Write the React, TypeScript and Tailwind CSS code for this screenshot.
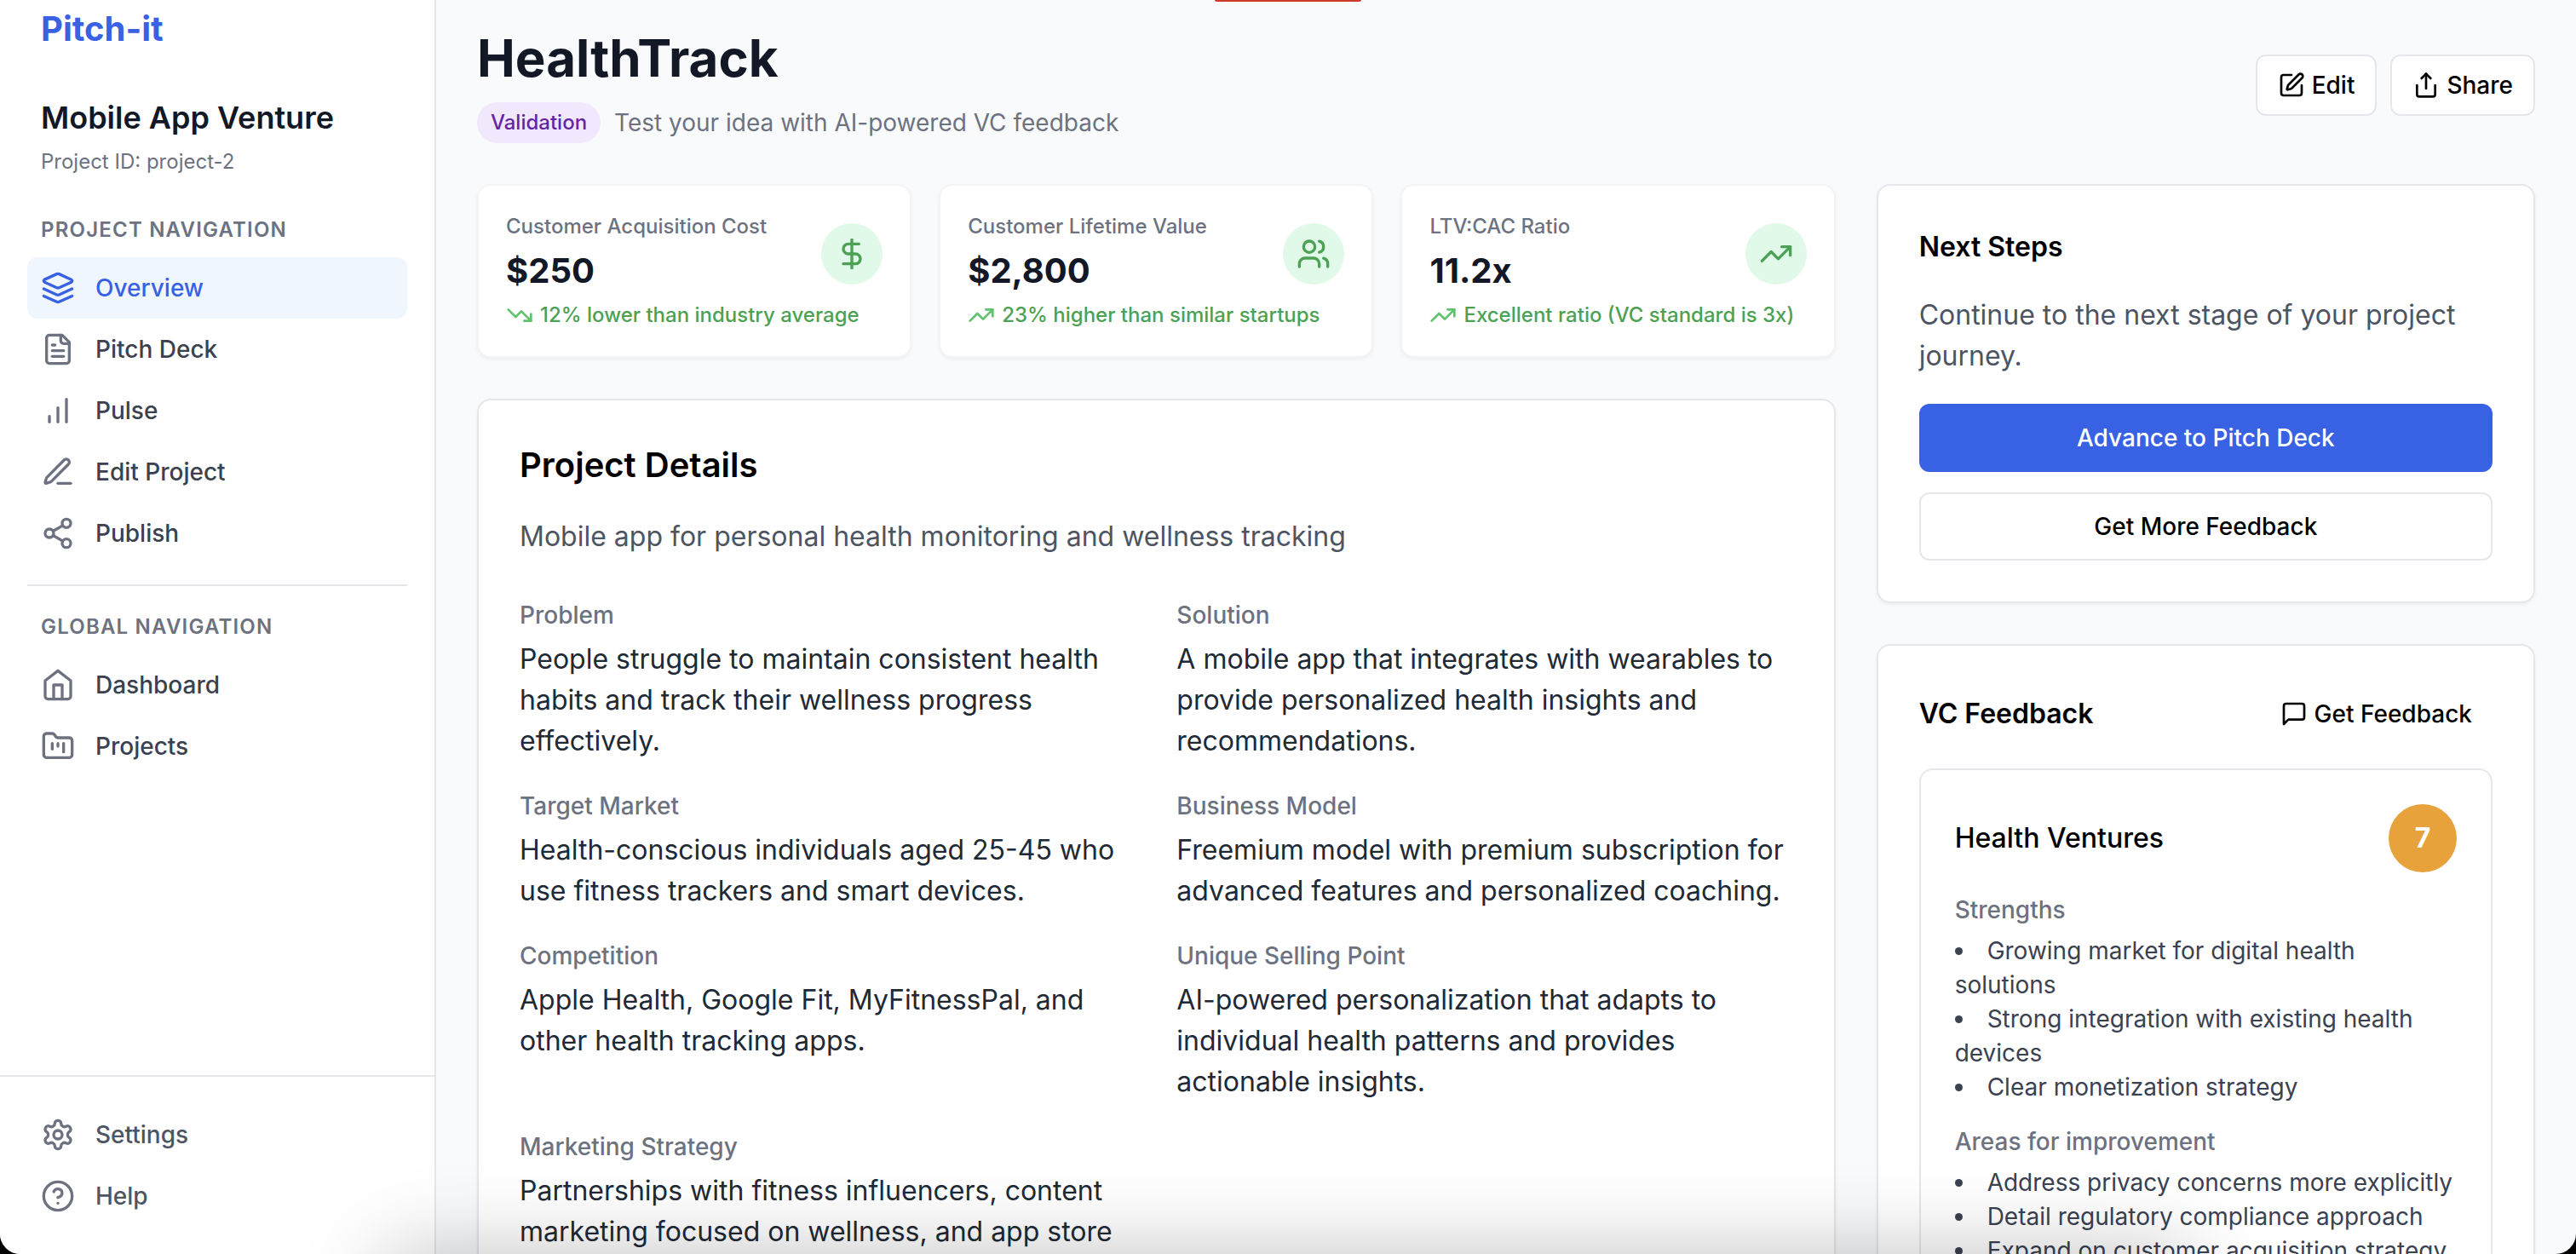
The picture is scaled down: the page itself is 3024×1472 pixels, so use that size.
import type { ReactNode } from "react";

type IconProps = { className?: string; children: ReactNode };

function Icon({ className = "size-8", children }: IconProps) {
  return (
    <svg
      viewBox="0 0 24 24"
      fill="none"
      stroke="currentColor"
      strokeWidth={2}
      strokeLinecap="round"
      strokeLinejoin="round"
      aria-hidden="true"
      className={`shrink-0 ${className}`}
    >
      {children}
    </svg>
  );
}

const shapes = {
  layers: (
    <>
      <path d="m12.83 2.18a2 2 0 0 0-1.66 0L2.6 6.08a1 1 0 0 0 0 1.83l8.58 3.91a2 2 0 0 0 1.66 0l8.58-3.9a1 1 0 0 0 0-1.83Z" />
      <path d="m22 17.65-9.17 4.16a2 2 0 0 1-1.66 0L2 17.65" />
      <path d="m22 12.65-9.17 4.16a2 2 0 0 1-1.66 0L2 12.65" />
    </>
  ),
  file: (
    <>
      <path d="M15 2H6a2 2 0 0 0-2 2v16a2 2 0 0 0 2 2h12a2 2 0 0 0 2-2V7Z" />
      <path d="M14 2v4a2 2 0 0 0 2 2h4" />
      <path d="M10 9H8" />
      <path d="M16 13H8" />
      <path d="M16 17H8" />
    </>
  ),
  bars: (
    <>
      <path d="M12 20V10" />
      <path d="M18 20V4" />
      <path d="M6 20v-4" />
    </>
  ),
  pen: (
    <>
      <path d="M12 20h9" />
      <path d="M16.376 3.622a1 1 0 0 1 3.002 3.002L7.368 18.635a2 2 0 0 1-.855.506l-2.872.838a.5.5 0 0 1-.62-.62l.838-2.872a2 2 0 0 1 .506-.854z" />
    </>
  ),
  nodes: (
    <>
      <circle cx="18" cy="5" r="3" />
      <circle cx="6" cy="12" r="3" />
      <circle cx="18" cy="19" r="3" />
      <path d="m8.59 13.51 6.83 3.98" />
      <path d="m15.41 6.51-6.82 3.98" />
    </>
  ),
  home: (
    <>
      <path d="m3 9 9-7 9 7v11a2 2 0 0 1-2 2H5a2 2 0 0 1-2-2z" />
      <path d="M9 22V12h6v10" />
    </>
  ),
  folder: (
    <>
      <path d="M4 20h16a2 2 0 0 0 2-2V8a2 2 0 0 0-2-2h-7.93a2 2 0 0 1-1.66-.9l-.82-1.2A2 2 0 0 0 7.93 3H4a2 2 0 0 0-2 2v13c0 1.1.9 2 2 2Z" />
      <path d="M8 10v4" />
      <path d="M12 10v2" />
      <path d="M16 10v6" />
    </>
  ),
  settings: (
    <>
      <path d="M12.22 2h-.44a2 2 0 0 0-2 2v.18a2 2 0 0 1-1 1.73l-.43.25a2 2 0 0 1-2 0l-.15-.08a2 2 0 0 0-2.73.73l-.22.38a2 2 0 0 0 .73 2.73l.15.1a2 2 0 0 1 1 1.72v.51a2 2 0 0 1-1 1.74l-.15.09a2 2 0 0 0-.73 2.73l.22.38a2 2 0 0 0 2.73.73l.15-.08a2 2 0 0 1 2 0l.43.25a2 2 0 0 1 1 1.73V20a2 2 0 0 0 2 2h.44a2 2 0 0 0 2-2v-.18a2 2 0 0 1 1-1.73l.43-.25a2 2 0 0 1 2 0l.15.08a2 2 0 0 0 2.73-.73l.22-.39a2 2 0 0 0-.73-2.73l-.15-.08a2 2 0 0 1-1-1.74v-.5a2 2 0 0 1 1-1.74l.15-.09a2 2 0 0 0 .73-2.73l-.22-.38a2 2 0 0 0-2.73-.73l-.15.08a2 2 0 0 1-2 0l-.43-.25a2 2 0 0 1-1-1.73V4a2 2 0 0 0-2-2z" />
      <circle cx="12" cy="12" r="3" />
    </>
  ),
  help: (
    <>
      <circle cx="12" cy="12" r="10" />
      <path d="M9.09 9a3 3 0 0 1 5.83 1c0 2-3 3-3 3" />
      <path d="M12 17h.01" />
    </>
  ),
  squarePen: (
    <>
      <path d="M12 3H5a2 2 0 0 0-2 2v14a2 2 0 0 0 2 2h14a2 2 0 0 0 2-2v-7" />
      <path d="M18.375 2.625a1 1 0 0 1 3 3l-9.013 9.014a2 2 0 0 1-.853.505l-2.873.84a.5.5 0 0 1-.62-.62l.84-2.873a2 2 0 0 1 .506-.852z" />
    </>
  ),
  share: (
    <>
      <path d="M4 12v8a2 2 0 0 0 2 2h12a2 2 0 0 0 2-2v-8" />
      <path d="m16 6-4-4-4 4" />
      <path d="M12 2v13" />
    </>
  ),
  message: <path d="M21 15a2 2 0 0 1-2 2H7l-4 4V5a2 2 0 0 1 2-2h14a2 2 0 0 1 2 2z" />,
  dollar: (
    <>
      <path d="M12 2v20" />
      <path d="M17 5H9.5a3.5 3.5 0 0 0 0 7h5a3.5 3.5 0 0 1 0 7H6" />
    </>
  ),
  users: (
    <>
      <path d="M16 21v-2a4 4 0 0 0-4-4H6a4 4 0 0 0-4 4v2" />
      <circle cx="9" cy="7" r="4" />
      <path d="M22 21v-2a4 4 0 0 0-3-3.87" />
      <path d="M16 3.13a4 4 0 0 1 0 7.75" />
    </>
  ),
  up: (
    <>
      <path d="m22 7-8.5 8.5-5-5L2 17" />
      <path d="M16 7h6v6" />
    </>
  ),
  down: (
    <>
      <path d="m22 17-8.5-8.5-5 5L2 7" />
      <path d="M16 17h6v-6" />
    </>
  ),
};

type NavItem = { label: string; icon: ReactNode };

const projectNav: NavItem[] = [
  { label: "Overview", icon: shapes.layers },
  { label: "Pitch Deck", icon: shapes.file },
  { label: "Pulse", icon: shapes.bars },
  { label: "Edit Project", icon: shapes.pen },
  { label: "Publish", icon: shapes.nodes },
];

const globalNav: NavItem[] = [
  { label: "Dashboard", icon: shapes.home },
  { label: "Projects", icon: shapes.folder },
];

const footerNav: NavItem[] = [
  { label: "Settings", icon: shapes.settings },
  { label: "Help", icon: shapes.help },
];

function NavLinks({ items, active, tone = "text-[#3a4150]" }: { items: NavItem[]; active?: string; tone?: string }) {
  return (
    <ul>
      {items.map(({ label, icon }) => {
        const on = label === active;
        return (
          <li key={label}>
            <a
              href="#"
              aria-current={on ? "page" : undefined}
              className={`flex h-18 items-center gap-6 rounded-xl px-4 text-[28px] leading-10 font-medium ${
                on ? "bg-[#eff6fe] text-[#3862e3]" : tone
              }`}
            >
              <Icon className={on ? "size-10" : "size-10 text-[#6d7280]"}>{icon}</Icon>
              {label}
            </a>
          </li>
        );
      })}
    </ul>
  );
}

function NavHeading({ children }: { children: ReactNode }) {
  return (
    <h3 className="mb-4 px-4 text-2xl leading-8 font-semibold tracking-wider text-[#6d7280] uppercase">{children}</h3>
  );
}

function Sidebar() {
  return (
    <aside className="flex w-128 shrink-0 flex-col border-r-2 border-[#e5e7eb] bg-white">
      <div className="flex-1 px-8 pt-[6px]">
        <a href="#" className="block px-4 text-[40px] leading-14 font-bold text-[#3862e3]">
          Pitch-it
        </a>
        <div className="mt-12 px-4">
          <h2 className="text-4xl leading-14 font-semibold text-[#131826]">Mobile App Venture</h2>
          <p className="mt-2 text-2xl leading-8 text-[#6d7280]">Project ID: project-2</p>
        </div>
        <nav className="mt-12" aria-label="Project">
          <NavHeading>Project Navigation</NavHeading>
          <NavLinks items={projectNav} active="Overview" />
        </nav>
        <nav className="mt-6 border-t-2 border-[#e5e7eb] pt-8" aria-label="Global">
          <NavHeading>Global Navigation</NavHeading>
          <NavLinks items={globalNav} />
        </nav>
      </div>
      <div className="border-t-2 border-[#e5e7eb] p-8">
        <NavLinks items={footerNav} tone="text-[#4d5562]" />
      </div>
    </aside>
  );
}

type Stat = { label: string; value: string; note: string; icon: ReactNode; trend: ReactNode };

const stats: Stat[] = [
  {
    label: "Customer Acquisition Cost",
    value: "$250",
    note: "12% lower than industry average",
    icon: shapes.dollar,
    trend: shapes.down,
  },
  {
    label: "Customer Lifetime Value",
    value: "$2,800",
    note: "23% higher than similar startups",
    icon: shapes.users,
    trend: shapes.up,
  },
  {
    label: "LTV:CAC Ratio",
    value: "11.2x",
    note: "Excellent ratio (VC standard is 3x)",
    icon: shapes.up,
    trend: shapes.up,
  },
];

function StatCard({ label, value, note, icon, trend }: Stat) {
  return (
    <div className="rounded-2xl border-2 border-[#f3f4f6] bg-white p-8 shadow-[0_2px_4px_rgba(0,0,0,0.05)]">
      <div className="flex items-center justify-between">
        <div>
          <p className="text-2xl leading-8 font-medium text-[#6d7280]">{label}</p>
          <p className="mt-2 text-[40px] leading-14 font-bold text-[#131826]">{value}</p>
        </div>
        <div className="rounded-full bg-[#e1f9e8] p-4 text-[#4ca154]">
          <Icon className="size-10">{icon}</Icon>
        </div>
      </div>
      <p className="mt-2 flex items-center gap-2 text-2xl leading-8 font-medium whitespace-nowrap text-[#4ca154]">
        <Icon className="size-8 text-[#5fc46b]">{trend}</Icon>
        {note}
      </p>
    </div>
  );
}

const details = [
  ["Problem", "People struggle to maintain consistent health habits and track their wellness progress effectively."],
  [
    "Solution",
    "A mobile app that integrates with wearables to provide personalized health insights and recommendations.",
  ],
  ["Target Market", "Health-conscious individuals aged 25-45 who use fitness trackers and smart devices."],
  [
    "Business Model",
    "Freemium model with premium subscription for advanced features and personalized coaching.",
  ],
  ["Competition", "Apple Health, Google Fit, MyFitnessPal, and other health tracking apps."],
  [
    "Unique Selling Point",
    "AI-powered personalization that adapts to individual health patterns and provides actionable insights.",
  ],
  [
    "Marketing Strategy",
    "Partnerships with fitness influencers, content marketing focused on wellness, and app store optimization.",
  ],
];

const card = "rounded-2xl border-2 border-[#e5e7eb] bg-white p-12 shadow-[0_2px_4px_rgba(0,0,0,0.05)]";
const headerButton =
  "flex h-18 items-center gap-2 rounded-xl border-2 border-[#e5e7eb] bg-white px-6 text-[28px] leading-10 font-medium text-black";

function ProjectDetails() {
  return (
    <section className={card}>
      <h2 className="text-[40px] leading-14 font-semibold text-black">Project Details</h2>
      <p className="mt-8 text-[32px] leading-12 text-[#4d5562]">
        Mobile app for personal health monitoring and wellness tracking
      </p>
      <dl className="mt-12 grid grid-cols-2 gap-x-12 gap-y-8">
        {details.map(([term, text]) => (
          <div key={term}>
            <dt className="text-[28px] leading-10 font-medium text-[#6d7280]">{term}</dt>
            <dd className="mt-2 text-[32px] leading-12 text-[#202936]">{text}</dd>
          </div>
        ))}
      </dl>
    </section>
  );
}

function NextSteps() {
  return (
    <section className={card}>
      <h3 className="text-[32px] leading-12 font-semibold text-black">Next Steps</h3>
      <p className="mt-8 text-[32px] leading-12 text-[#4d5562]">Continue to the next stage of your project journey.</p>
      <button
        type="button"
        className="mt-8 h-20 w-full rounded-xl bg-[#3862e3] text-[28px] leading-10 font-medium text-white"
      >
        Advance to Pitch Deck
      </button>
      <button
        type="button"
        className="mt-6 h-20 w-full rounded-xl border-2 border-[#e5e7eb] bg-white text-[28px] leading-10 font-medium text-black"
      >
        Get More Feedback
      </button>
    </section>
  );
}

function FeedbackList({ title, items }: { title: string; items: string[] }) {
  return (
    <div className="mt-6">
      <h5 className="text-[28px] leading-10 font-medium text-[#6d7280]">{title}</h5>
      <ul className="mt-2 list-inside list-disc text-[28px] leading-10 text-[#3a4150]">
        {items.map((item) => (
          <li key={item}>{item}</li>
        ))}
      </ul>
    </div>
  );
}

function Feedback() {
  return (
    <section className={card}>
      <div className="flex items-center justify-between">
        <h3 className="text-[32px] leading-12 font-semibold text-black">VC Feedback</h3>
        <button
          type="button"
          className="flex h-16 items-center gap-2 rounded-xl px-6 text-[28px] leading-10 font-medium text-black"
        >
          <Icon>{shapes.message}</Icon>
          Get Feedback
        </button>
      </div>
      <article className="mt-8 rounded-2xl border-2 border-[#e5e7eb] p-10">
        <div className="flex items-center justify-between">
          <h4 className="text-[32px] leading-12 font-medium text-black">Health Ventures</h4>
          <span className="flex size-20 items-center justify-center rounded-full bg-[#e8a23c] text-[32px] leading-12 font-bold text-white">
            7
          </span>
        </div>
        <FeedbackList
          title="Strengths"
          items={[
            "Growing market for digital health solutions",
            "Strong integration with existing health devices",
            "Clear monetization strategy",
          ]}
        />
        <FeedbackList
          title="Areas for improvement"
          items={[
            "Address privacy concerns more explicitly",
            "Detail regulatory compliance approach",
            "Expand on customer acquisition strategy",
          ]}
        />
      </article>
    </section>
  );
}

export default function App() {
  return (
    <div className="h-screen overflow-hidden bg-black font-['Inter',sans-serif]">
      <div className="relative flex h-full overflow-hidden rounded-b-[24px] bg-[#f9fafc]">
        <Sidebar />
        <main className="min-w-0 flex-1 overflow-hidden px-12 pt-8">
          <header className="flex items-center justify-between">
            <div>
              <h1 className="text-6xl leading-18 font-bold text-[#131826]">HealthTrack</h1>
              <div className="mt-4 flex items-center gap-4">
                <span className="rounded-full bg-[#f1e8fd] px-4 py-2 text-2xl leading-8 font-medium text-[#6325a3]">
                  Validation
                </span>
                <p className="text-[28px] leading-10 text-[#6d7280]">Test your idea with AI-powered VC feedback</p>
              </div>
            </div>
            <div className="flex gap-4">
              <button type="button" className={headerButton}>
                <Icon>{shapes.squarePen}</Icon>
                Edit
              </button>
              <button type="button" className={headerButton}>
                <Icon>{shapes.share}</Icon>
                Share
              </button>
            </div>
          </header>
          <div className="mt-12 grid grid-cols-3 items-start gap-12">
            <div className="col-span-2 space-y-12">
              <div className="grid grid-cols-3 gap-8">
                {stats.map((stat) => (
                  <StatCard key={stat.label} {...stat} />
                ))}
              </div>
              <ProjectDetails />
            </div>
            <div className="space-y-12">
              <NextSteps />
              <Feedback />
            </div>
          </div>
        </main>
        <div className="pointer-events-none absolute top-0 left-1/2 h-[2px] w-[172px] -translate-x-1/2 rounded-b-sm bg-[#d03a2b]" />
        <div className="pointer-events-none absolute inset-x-[15%] top-full h-40 shadow-[0_0_100px_rgba(0,0,0,0.25)]" />
      </div>
    </div>
  );
}
